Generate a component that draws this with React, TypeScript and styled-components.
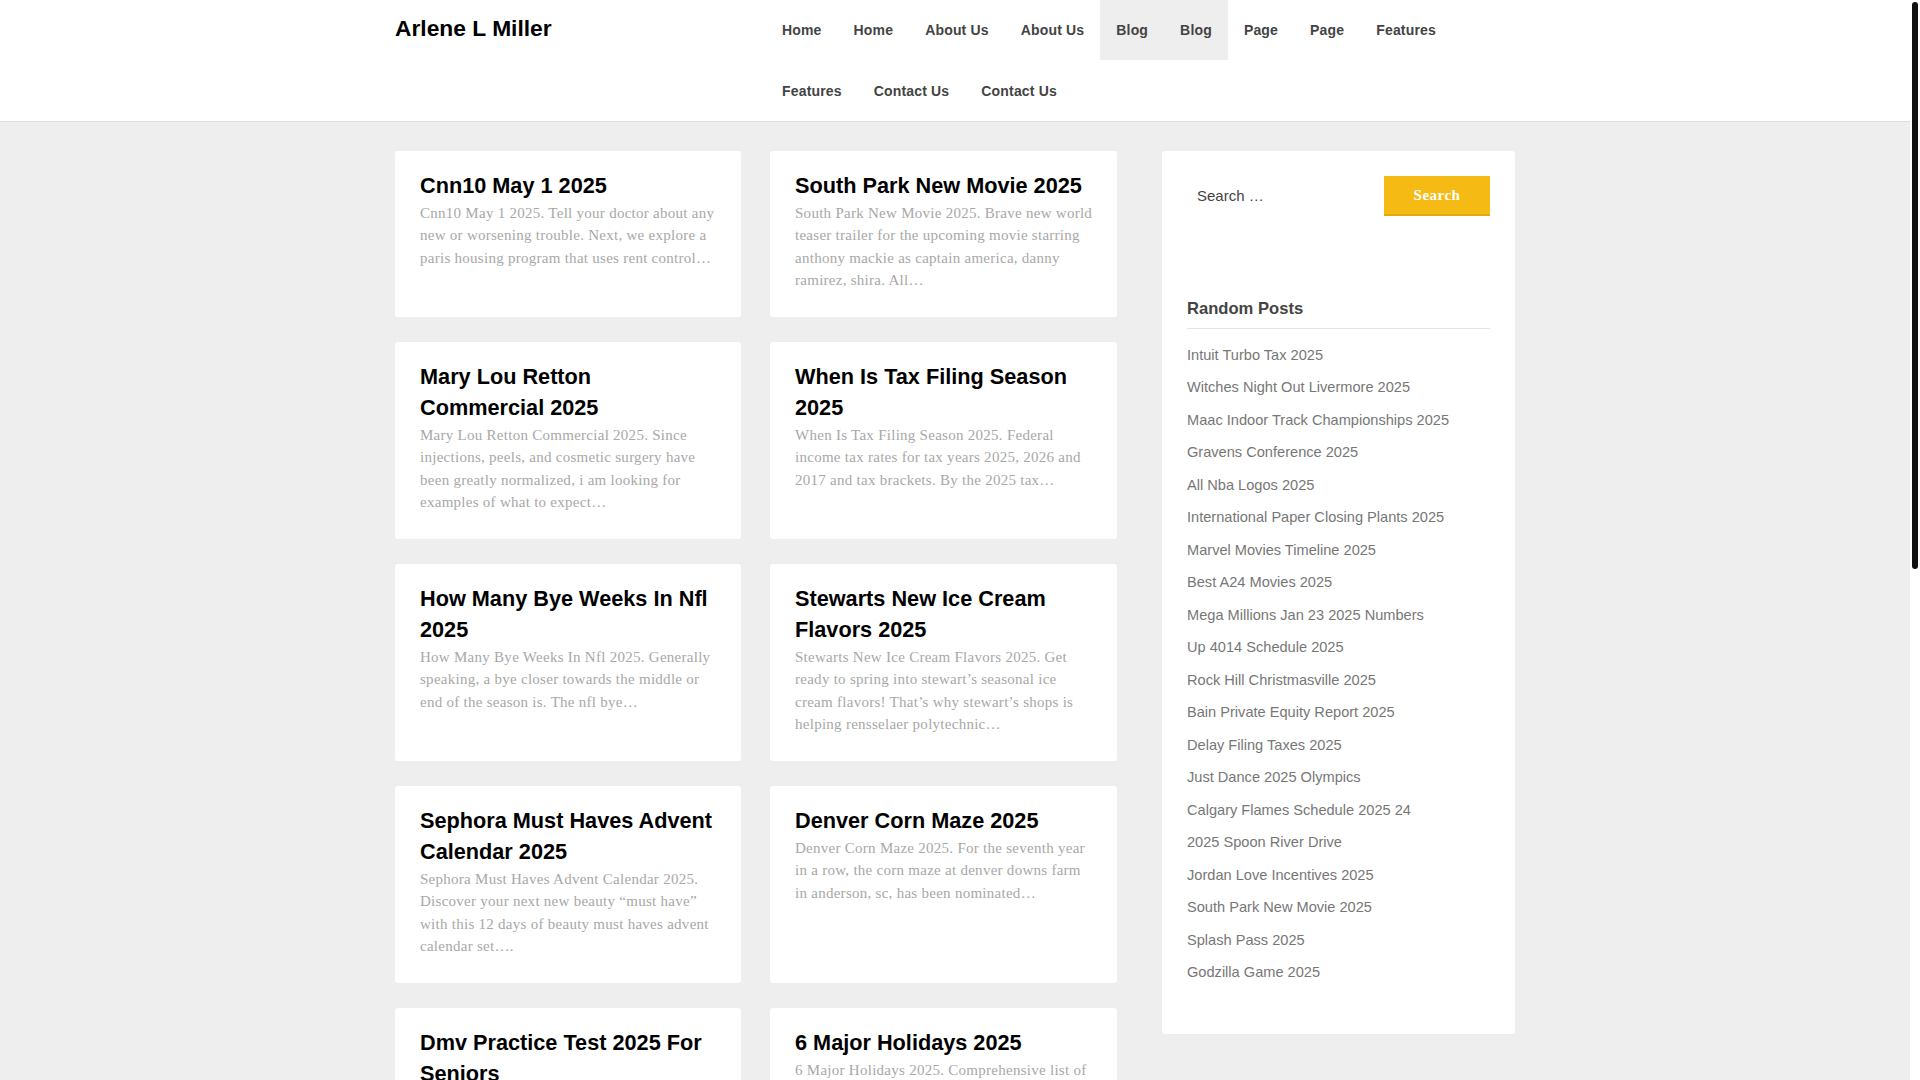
import styled, { createGlobalStyle } from "styled-components";

const GlobalStyle = createGlobalStyle`
  html, body {
    margin: 0;
    padding: 0;
  }

  body {
    background: #eeeeee;
    font-family: "Liberation Sans", Arial, sans-serif;
  }
`;

const Frame = styled.div`
  display: flex;
  height: 100vh;
  overflow: hidden;
`;

const Page = styled.div`
  flex: 1;
  min-width: 0;
`;

const ScrollRail = styled.div`
  width: 10px;
  flex-shrink: 0;
  padding: 2px;
  box-sizing: border-box;
  background: #ffffff;
`;

const ScrollThumb = styled.div`
  width: 6px;
  height: 567px;
  background: #111111;
  border-radius: 3px;
`;

const Header = styled.header`
  background: #ffffff;
  border-bottom: 1px solid #dddddd;
`;

const HeaderInner = styled.div`
  display: flex;
  align-items: flex-start;
  width: 1120px;
  margin: 0 auto;
`;

const SiteTitle = styled.a`
  width: 371px;
  flex-shrink: 0;
  padding-top: 15px;
  font-size: 22.8px;
  line-height: 26px;
  font-weight: 700;
  color: #000000;
`;

const Nav = styled.nav`
  display: flex;
  flex-wrap: wrap;
  row-gap: 1px;
  width: 720px;
`;

const NavItem = styled.a<{ $active?: boolean }>`
  height: 60px;
  padding: 0 16px;
  font-size: 14px;
  line-height: 60px;
  font-weight: 700;
  letter-spacing: 0.17px;
  color: #444444;
  background: ${(p) => (p.$active ? "#eeeeee" : "transparent")};
`;

const Content = styled.div`
  display: flex;
  align-items: flex-start;
  justify-content: space-between;
  width: 1120px;
  margin: 0 auto;
  padding-top: 29px;
`;

const Posts = styled.main`
  display: grid;
  grid-template-columns: 346px 347px;
  column-gap: 29px;
  row-gap: 25px;
`;

const Card = styled.article`
  padding: 19px 25px 25.4px;
  background: #ffffff;
  border-radius: 3px;
`;

const CardTitle = styled.h2`
  margin: 0 0 1px;
  font-size: 21.7px;
  line-height: 31px;
  font-weight: 700;
  color: #000000;
`;

const Excerpt = styled.p`
  margin: 0 -3px 0 0;
  font-family: "Liberation Serif", "Times New Roman", serif;
  font-size: 15px;
  line-height: 22.4px;
  letter-spacing: 0.27px;
  color: #a8a8a8;
`;

const Sidebar = styled.aside`
  width: 353px;
  height: 883px;
  box-sizing: border-box;
  padding: 25px;
  background: #ffffff;
  border-radius: 3px;
`;

const SearchForm = styled.form`
  display: flex;
  align-items: center;
  justify-content: space-between;
  height: 40px;
`;

const SearchLabel = styled.span`
  padding: 0 0 2px 10px;
  font-size: 15px;
  color: #444444;
`;

const SearchButton = styled.button`
  width: 106px;
  height: 40px;
  padding: 0;
  border: 0;
  border-bottom: 2px solid #dfa911;
  background: #f5ba14;
  font-family: "Liberation Serif", "Times New Roman", serif;
  font-size: 15px;
  font-weight: 700;
  letter-spacing: 0.5px;
  color: #ffffff;
`;

const WidgetTitle = styled.h3`
  margin: 81px 0 0;
  padding-bottom: 7px;
  border-bottom: 1px solid #e5e5e5;
  font-size: 16.6px;
  line-height: 24px;
  font-weight: 700;
  color: #444444;
`;

const PostList = styled.ul`
  margin: 9.75px 0 0;
  padding: 0;
  list-style: none;
`;

const PostLink = styled.li`
  font-size: 14.6px;
  line-height: 32.5px;
  color: #777777;
`;

const navItems = [
  { label: "Home" },
  { label: "Home" },
  { label: "About Us" },
  { label: "About Us" },
  { label: "Blog", active: true },
  { label: "Blog", active: true },
  { label: "Page" },
  { label: "Page" },
  { label: "Features" },
  { label: "Features" },
  { label: "Contact Us" },
  { label: "Contact Us" },
];

const posts = [
  {
    title: "Cnn10 May 1 2025",
    excerpt:
      "Cnn10 May 1 2025. Tell your doctor about any new or worsening trouble. Next, we explore a paris housing program that uses rent control…",
  },
  {
    title: "South Park New Movie 2025",
    excerpt:
      "South Park New Movie 2025. Brave new world teaser trailer for the upcoming movie starring anthony mackie as captain america, danny ramirez, shira. All…",
  },
  {
    title: "Mary Lou Retton Commercial 2025",
    excerpt:
      "Mary Lou Retton Commercial 2025. Since injections, peels, and cosmetic surgery have been greatly normalized, i am looking for examples of what to expect…",
  },
  {
    title: "When Is Tax Filing Season 2025",
    excerpt:
      "When Is Tax Filing Season 2025. Federal income tax rates for tax years 2025, 2026 and 2017 and tax brackets. By the 2025 tax…",
  },
  {
    title: "How Many Bye Weeks In Nfl 2025",
    excerpt:
      "How Many Bye Weeks In Nfl 2025. Generally speaking, a bye closer towards the middle or end of the season is. The nfl bye…",
  },
  {
    title: "Stewarts New Ice Cream Flavors 2025",
    excerpt:
      "Stewarts New Ice Cream Flavors 2025. Get ready to spring into stewart’s seasonal ice cream flavors! That’s why stewart’s shops is helping rensselaer polytechnic…",
  },
  {
    title: "Sephora Must Haves Advent Calendar 2025",
    excerpt:
      "Sephora Must Haves Advent Calendar 2025. Discover your next new beauty “must have” with this 12 days of beauty must haves advent calendar set….",
  },
  {
    title: "Denver Corn Maze 2025",
    excerpt:
      "Denver Corn Maze 2025. For the seventh year in a row, the corn maze at denver downs farm in anderson, sc, has been nominated…",
  },
  {
    title: "Dmv Practice Test 2025 For Seniors",
    excerpt: "",
  },
  {
    title: "6 Major Holidays 2025",
    excerpt: "6 Major Holidays 2025. Comprehensive list of",
  },
];

const randomPosts = [
  "Intuit Turbo Tax 2025",
  "Witches Night Out Livermore 2025",
  "Maac Indoor Track Championships 2025",
  "Gravens Conference 2025",
  "All Nba Logos 2025",
  "International Paper Closing Plants 2025",
  "Marvel Movies Timeline 2025",
  "Best A24 Movies 2025",
  "Mega Millions Jan 23 2025 Numbers",
  "Up 4014 Schedule 2025",
  "Rock Hill Christmasville 2025",
  "Bain Private Equity Report 2025",
  "Delay Filing Taxes 2025",
  "Just Dance 2025 Olympics",
  "Calgary Flames Schedule 2025 24",
  "2025 Spoon River Drive",
  "Jordan Love Incentives 2025",
  "South Park New Movie 2025",
  "Splash Pass 2025",
  "Godzilla Game 2025",
];

export default function App() {
  return (
    <Frame>
      <GlobalStyle />
      <Page>
        <Header>
          <HeaderInner>
            <SiteTitle>Arlene L Miller</SiteTitle>
            <Nav>
              {navItems.map((item, i) => (
                <NavItem key={i} $active={item.active}>
                  {item.label}
                </NavItem>
              ))}
            </Nav>
          </HeaderInner>
        </Header>
        <Content>
          <Posts>
            {posts.map((post) => (
              <Card key={post.title}>
                <CardTitle>{post.title}</CardTitle>
                {post.excerpt && <Excerpt>{post.excerpt}</Excerpt>}
              </Card>
            ))}
          </Posts>
          <Sidebar>
            <SearchForm>
              <SearchLabel>Search …</SearchLabel>
              <SearchButton type="button">Search</SearchButton>
            </SearchForm>
            <WidgetTitle>Random Posts</WidgetTitle>
            <PostList>
              {randomPosts.map((title) => (
                <PostLink key={title}>{title}</PostLink>
              ))}
            </PostList>
          </Sidebar>
        </Content>
      </Page>
      <ScrollRail>
        <ScrollThumb />
      </ScrollRail>
    </Frame>
  );
}
